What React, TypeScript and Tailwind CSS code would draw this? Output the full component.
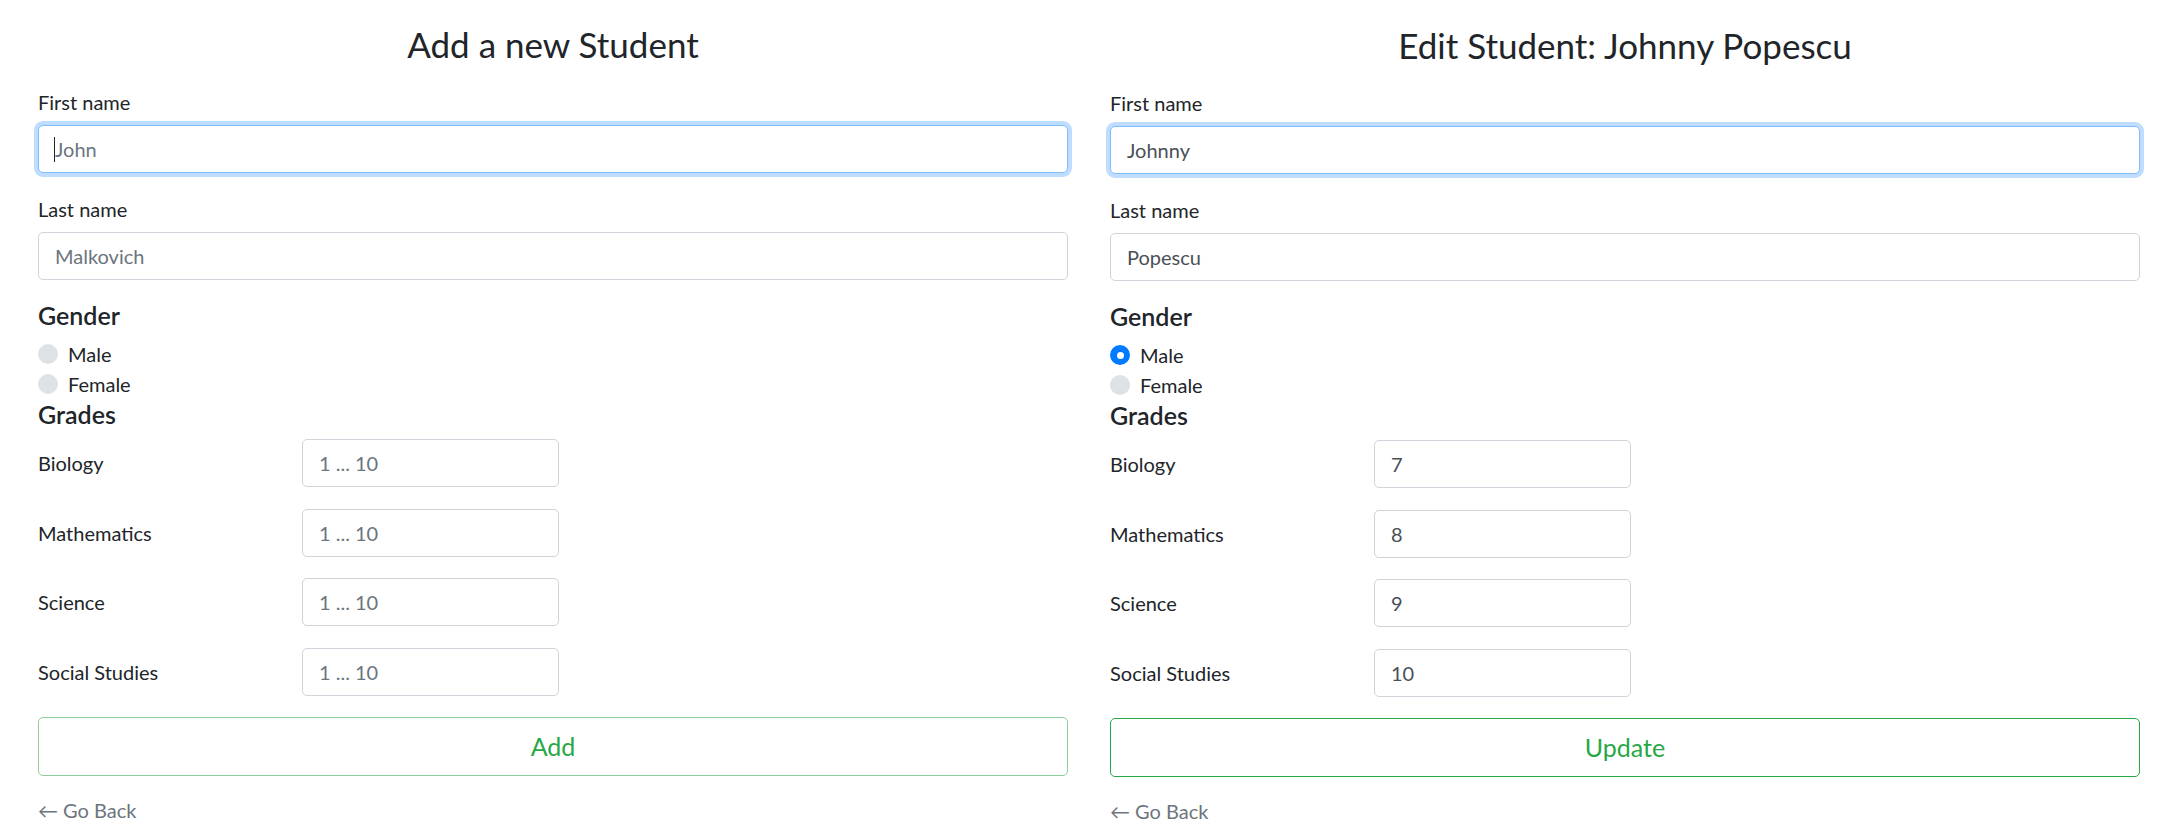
import React from "react";

type FieldProps = {
  label: string;
  value?: string;
  placeholder?: string;
  focused?: boolean;
  caret?: boolean;
};

function TextField({ label, value, placeholder, focused, caret }: FieldProps) {
  return (
    <div className="mb-[21px]">
      <label className="mb-2 block text-[20px] leading-[30px] text-[#212529]">{label}</label>
      <div className="relative">
        <input
          readOnly
          defaultValue={value}
          placeholder={placeholder}
          className={
            focused
              ? "block h-12 w-full rounded-[5px] border border-[#80bdff] bg-white px-4 text-[20px] text-[#495057] shadow-[0_0_0_4px_rgba(0,123,255,0.25)] outline-none placeholder:text-[#6c757d]"
              : "block h-12 w-full rounded-[5px] border border-[#ced4da] bg-white px-4 text-[20px] text-[#495057] outline-none placeholder:text-[#6c757d]"
          }
        />
        {caret && <span className="absolute left-[16px] top-[12px] h-[25px] w-px bg-[#212529]" />}
      </div>
    </div>
  );
}

function Radio({ label, checked }: { label: string; checked?: boolean }) {
  return (
    <div className="flex items-start text-[20px] leading-[30px] text-[#212529]">
      {checked ? (
        <span className="mt-[5px] flex h-5 w-5 shrink-0 items-center justify-center rounded-full bg-[#007bff]">
          <span className="h-[7px] w-[7px] rounded-full bg-white" />
        </span>
      ) : (
        <span className="mt-[5px] h-5 w-5 shrink-0 rounded-full bg-[#dee2e6]" />
      )}
      <span className="ml-[10px]">{label}</span>
    </div>
  );
}

function GradeRow({ subject, value }: { subject: string; value?: string }) {
  return (
    <div className="mb-[21.5px] flex items-center">
      <span className="w-[264px] text-[20px] leading-[30px] text-[#212529]">{subject}</span>
      <input
        readOnly
        defaultValue={value}
        placeholder="1 ... 10"
        className="h-12 w-[257px] rounded-[5px] border border-[#ced4da] bg-white px-4 text-[20px] text-[#495057] outline-none placeholder:text-[#6c757d]"
      />
    </div>
  );
}

type FormProps = {
  title: string;
  first?: string;
  last?: string;
  gender?: "male" | "female";
  grades?: string[];
  action: string;
  light?: boolean;
};

const subjects = ["Biology", "Mathematics", "Science", "Social Studies"];

function StudentForm({ title, first, last, gender, grades, action, light }: FormProps) {
  return (
    <div className="w-[1030px] shrink-0 pt-[22px]">
      <h2 className="mb-[21px] text-center text-[35px] font-normal leading-[44px] text-[#212529]">{title}</h2>

      <TextField label="First name" value={first} placeholder="John" focused caret={!first} />
      <TextField label="Last name" value={last} placeholder="Malkovich" />

      <h4 className="mb-[9px] text-[25px] font-semibold leading-[29px] text-[#212529]">Gender</h4>
      <Radio label="Male" checked={gender === "male"} />
      <Radio label="Female" checked={gender === "female"} />

      <h4 className="mb-[10px] mt-[1px] text-[25px] font-semibold leading-[29px] text-[#212529]">Grades</h4>
      {subjects.map((s, i) => (
        <GradeRow key={s} subject={s} value={grades ? grades[i] : undefined} />
      ))}

      <button
        className={
          light
            ? "h-[59px] w-full rounded-[5px] border border-[#8dcf9c] bg-white text-[25px] text-[#28a745]"
            : "h-[59px] w-full rounded-[5px] border border-[#28a745] bg-white text-[25px] text-[#28a745]"
        }
      >
        {action}
      </button>

      <a className="mt-[19px] block text-[20px] leading-[30px] text-[#6c757d]">← Go Back</a>
    </div>
  );
}

export default function App() {
  return (
    <div className="flex h-[825px] w-[2180px] gap-[42px] overflow-hidden bg-white pl-[38px] font-['Lato',sans-serif]">
      <StudentForm title="Add a new Student" action="Add" light />
      <div className="pt-[1px]">
        <StudentForm
          title="Edit Student: Johnny Popescu"
          first="Johnny"
          last="Popescu"
          gender="male"
          grades={["7", "8", "9", "10"]}
          action="Update"
        />
      </div>
    </div>
  );
}
